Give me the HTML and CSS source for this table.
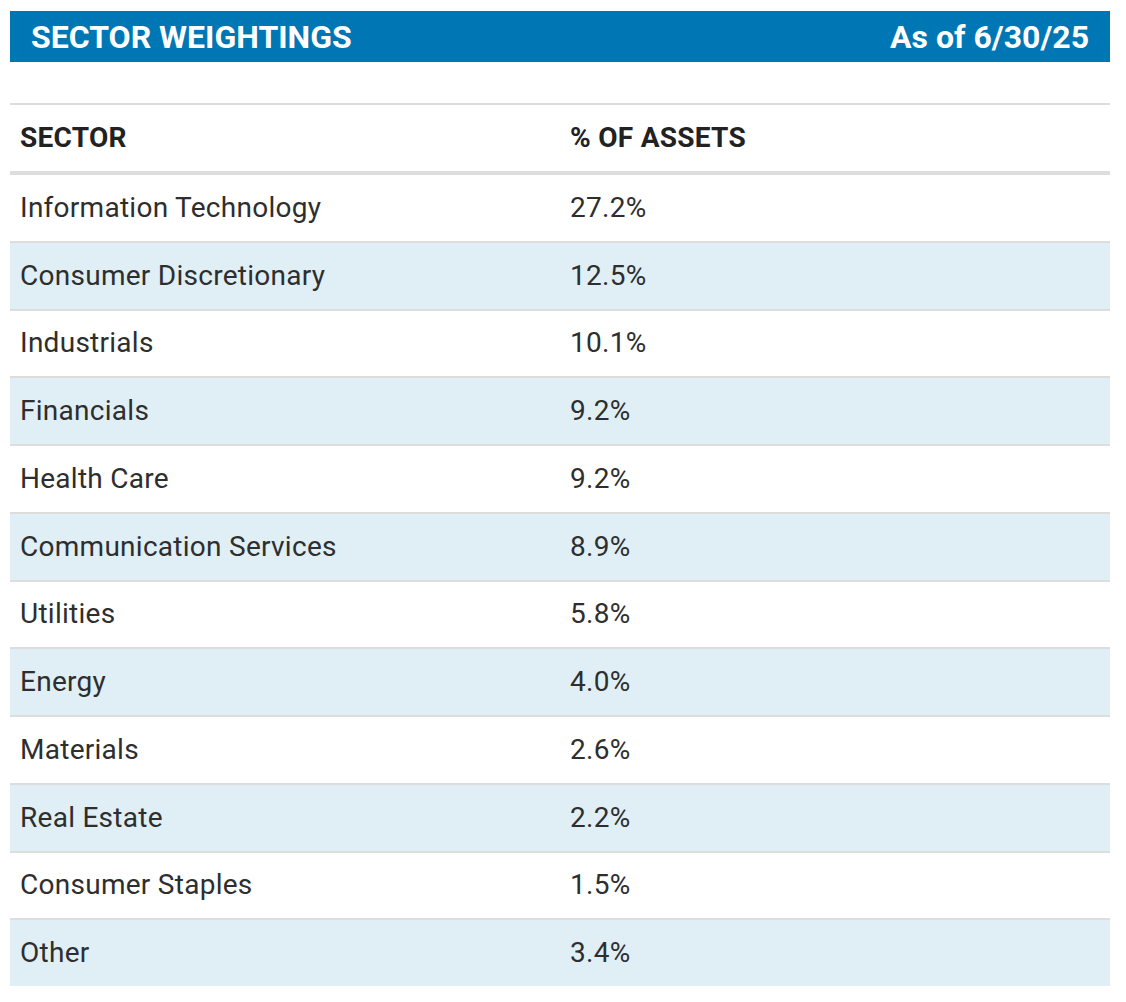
FILE: index.html
```html
<!DOCTYPE html>
<html>
<head>
<meta charset="utf-8">
<link rel="stylesheet" href="styles.css">
</head>
<body>
<div class="panel">
  <div class="banner">
    <span class="banner-title">SECTOR WEIGHTINGS</span>
    <span class="banner-date">As of 6/30/25</span>
  </div>
  <div class="table">
    <div class="row head"><div class="cell">SECTOR</div><div class="cell">% OF ASSETS</div></div>
    <div class="row"><div class="cell">Information Technology</div><div class="cell">27.2%</div></div>
    <div class="row alt"><div class="cell">Consumer Discretionary</div><div class="cell">12.5%</div></div>
    <div class="row"><div class="cell">Industrials</div><div class="cell">10.1%</div></div>
    <div class="row alt"><div class="cell">Financials</div><div class="cell">9.2%</div></div>
    <div class="row"><div class="cell">Health Care</div><div class="cell">9.2%</div></div>
    <div class="row alt"><div class="cell">Communication Services</div><div class="cell">8.9%</div></div>
    <div class="row"><div class="cell">Utilities</div><div class="cell">5.8%</div></div>
    <div class="row alt"><div class="cell">Energy</div><div class="cell">4.0%</div></div>
    <div class="row"><div class="cell">Materials</div><div class="cell">2.6%</div></div>
    <div class="row alt"><div class="cell">Real Estate</div><div class="cell">2.2%</div></div>
    <div class="row"><div class="cell">Consumer Staples</div><div class="cell">1.5%</div></div>
    <div class="row alt"><div class="cell">Other</div><div class="cell">3.4%</div></div>
  </div>
</div>
</body>
</html>
```

FILE: styles.css
```css
html, body {
  margin: 0;
  padding: 0;
  background: #ffffff;
}
body {
  font-family: Roboto, "Liberation Sans", sans-serif;
  color: #2e2e2e;
}
.panel {
  width: 1100px;
  padding: 11px 0 0 10px;
}
.banner {
  height: 51px;
  background: #0077b5;
  display: flex;
  align-items: center;
  justify-content: space-between;
  padding: 0 21px;
  color: #ffffff;
  font-weight: 700;
  font-size: 32px;
}
.table {
  margin-top: 41px;
  border-top: 2px solid #dddddd;
}
.row {
  display: grid;
  grid-template-columns: 550px 1fr;
  height: 64.75px;
  padding-bottom: 1px;
  align-items: center;
  font-size: 28px;
  letter-spacing: 0.27px;
}
.row + .row {
  border-top: 2px solid #dddddd;
}
.row.head {
  height: 65px;
  font-weight: 700;
  color: #222222;
  border-bottom: 2px solid #dddddd;
}
.row.alt {
  background: #e0eef6;
}
.cell {
  padding-left: 10px;
}
```
